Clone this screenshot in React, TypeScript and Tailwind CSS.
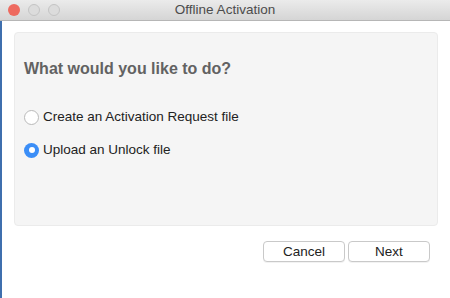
import React, { useState } from "react";

type Choice = "request" | "unlock";

function Radio({ checked }: { checked: boolean }) {
	return checked ? (
		<span className="flex size-[15px] shrink-0 items-center justify-center rounded-full bg-[#3b8ef7]">
			<span className="size-[6px] rounded-full bg-white" />
		</span>
	) : (
		<span className="size-[15px] shrink-0 rounded-full border border-[#b9b9b9] bg-white" />
	);
}

export default function App() {
	const [choice, setChoice] = useState<Choice>("unlock");

	return (
		<div
			className="flex h-[298px] w-[450px] bg-[#3f6fae]"
			style={{ fontFamily: '"Liberation Sans", Arial, sans-serif' }}
		>
			<div className="ml-[2px] flex flex-1 flex-col bg-white">
				{/* title bar */}
				<div className="relative -ml-[2px] flex h-[21px] items-center border-b border-[#b6b6b6] bg-gradient-to-b from-[#ebebeb] to-[#d5d5d5]">
					<div className="flex gap-[8px] pl-[8px]">
						<span className="size-[12px] rounded-full bg-[#ee6a5f]" />
						<span className="size-[12px] rounded-full border border-[#c4c4c4] bg-[#dcdcdc]" />
						<span className="size-[12px] rounded-full border border-[#c4c4c4] bg-[#dcdcdc]" />
					</div>
					<div className="absolute inset-0 flex items-center justify-center text-[13.5px] text-[#4c4c4c]">
						Offline Activation
					</div>
				</div>

				<div className="flex flex-1 flex-col px-[12px] pt-[11px]">
					<div className="h-[194px] rounded-[4px] border border-[#ebebeb] bg-[#f5f5f5] px-[9px] pt-[26px]">
						<h1 className="text-[16px] leading-[20px] font-bold text-[#626262]">
							What would you like to do?
						</h1>
						<div className="mt-[28px] flex flex-col gap-[13px] text-[13.5px] leading-[20px] text-[#222]">
							<label
								className="flex items-center gap-[4px]"
								onClick={() => setChoice("request")}
							>
								<Radio checked={choice === "request"} />
								Create an Activation Request file
							</label>
							<label
								className="flex items-center gap-[4px]"
								onClick={() => setChoice("unlock")}
							>
								<Radio checked={choice === "unlock"} />
								Upload an Unlock file
							</label>
						</div>
					</div>

					<div className="mt-[15px] flex justify-end gap-[3px] pr-[8px]">
						<button className="h-[21px] w-[82px] rounded-[4px] border border-[#c9c9c9] bg-white text-[13.5px] text-[#222] shadow-[0_1px_0_rgba(0,0,0,0.05)]">
							Cancel
						</button>
						<button className="h-[21px] w-[82px] rounded-[4px] border border-[#c9c9c9] bg-white text-[13.5px] text-[#222] shadow-[0_1px_0_rgba(0,0,0,0.05)]">
							Next
						</button>
					</div>
				</div>
			</div>
		</div>
	);
}
